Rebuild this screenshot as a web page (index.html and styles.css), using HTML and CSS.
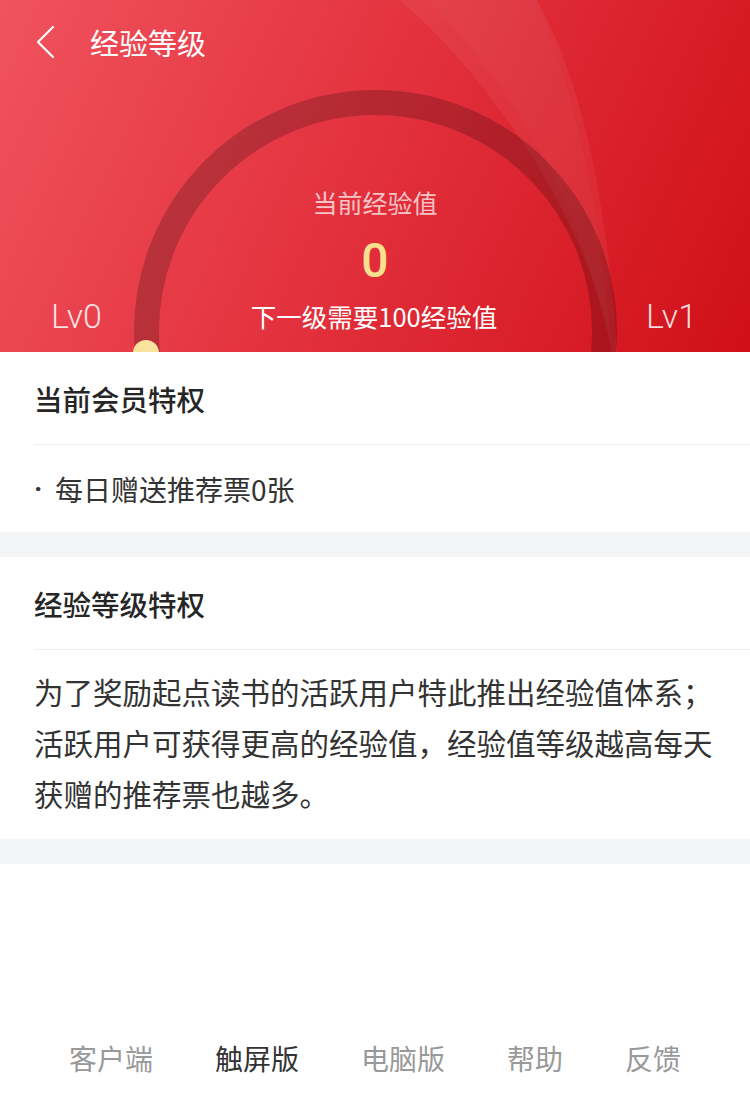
FILE: index.html
```html
<!DOCTYPE html>
<html lang="zh-CN">
<head>
<meta charset="utf-8">
<title>经验等级</title>
<link rel="stylesheet" href="styles.css">
</head>
<body>
<div class="page">
  <header class="hero">
    <svg class="hero-bg" width="750" height="352" viewBox="0 0 750 352" aria-hidden="true">
      <defs>
        <linearGradient id="bg" x1="0" y1="0" x2="750" y2="352" gradientUnits="userSpaceOnUse">
          <stop offset="0" stop-color="#f0535e"/>
          <stop offset="0.5" stop-color="#e2303c"/>
          <stop offset="1" stop-color="#d00f18"/>
        </linearGradient>
      </defs>
      <rect x="0" y="0" width="750" height="352" fill="url(#bg)"/>
      <path d="M400,0 C470,60 585,200 612,352 L617,352 C607,200 582,80 537,0 Z" fill="#ffffff" fill-opacity="0.055"/>
      <path d="M428,0 C495,70 570,170 603,320 L612,352 C600,210 575,90 537,0 Z" fill="#ffffff" fill-opacity="0.025"/>
      <circle cx="375.5" cy="331.5" r="229" fill="none" stroke="#000" stroke-opacity="0.2" stroke-width="25"/>
      <circle cx="146" cy="353" r="13" fill="#f9e29c"/>
    </svg>
    <nav class="nav">
      <svg class="back" width="22" height="34" viewBox="0 0 22 34" aria-hidden="true">
        <polyline points="18,2 3,17 18,32" fill="none" stroke="#fff" stroke-width="2.2" stroke-linecap="round" stroke-linejoin="round"/>
      </svg>
      <h1 class="nav-title">经验等级</h1>
    </nav>
    <div class="gauge">
      <div class="gauge-label">当前经验值</div>
      <div class="gauge-value">0</div>
      <div class="gauge-row">
        <span class="lv">Lv0</span>
        <span class="gauge-next">下一级需要100经验值</span>
        <span class="lv">Lv1</span>
      </div>
    </div>
  </header>

  <section class="card">
    <h2 class="card-title">当前会员特权</h2>
    <div class="card-item"><span class="bullet">·</span>每日赠送推荐票0张</div>
  </section>
  <div class="gap"></div>

  <section class="card">
    <h2 class="card-title">经验等级特权</h2>
    <p class="card-text">为了奖励起点读书的活跃用户特此推出经验值体系；活跃用户可获得更高的经验值，经验值等级越高每天获赠的推荐票也越多。</p>
  </section>
  <div class="gap"></div>

  <footer class="footer">
    <a class="footer-link">客户端</a>
    <a class="footer-link active">触屏版</a>
    <a class="footer-link">电脑版</a>
    <a class="footer-link">帮助</a>
    <a class="footer-link">反馈</a>
  </footer>
</div>
</body>
</html>
```
FILE: styles.css
```css
* { box-sizing: border-box; }
html, body { margin: 0; padding: 0; background: #fff; }
body {
  font-family: "Noto Sans CJK SC", "Noto Sans", sans-serif;
  color: #333;
}
.page { width: 750px; }

.hero {
  position: relative;
  height: 352px;
  overflow: hidden;
  color: #fff;
}
.hero-bg {
  position: absolute;
  left: 0;
  top: 0;
  display: block;
}
.nav {
  position: relative;
  height: 84px;
  display: flex;
  align-items: center;
  padding-left: 35px;
}
.back { display: block; }
.nav-title {
  margin: 0 0 0 33px;
  font-size: 29px;
  font-weight: 400;
  line-height: 40px;
}
.gauge {
  position: relative;
  padding-top: 100px;
  text-align: center;
}
.gauge-label {
  font-size: 25px;
  line-height: 36px;
  color: rgba(255, 255, 255, 0.72);
}
.gauge-value {
  margin-top: 13px;
  font-family: Roboto, "Noto Sans", sans-serif;
  font-size: 48px;
  font-weight: 500;
  line-height: 56px;
  color: #f9e08f;
}
.gauge-row {
  margin-top: 9px;
  display: grid;
  grid-template-columns: 1fr auto 1fr;
  align-items: center;
  padding: 0 53px 0 51px;
}
.gauge-next {
  font-size: 25.5px;
  line-height: 36px;
}
.lv {
  font-family: Roboto, "Noto Sans", sans-serif;
  font-weight: 300;
  font-size: 34px;
  line-height: 36px;
  color: rgba(255, 255, 255, 0.85);
  text-align: left;
}
.lv:last-child { text-align: right; }

.card {
  padding-left: 34px;
  background: #fff;
}
.card-title {
  margin: 0;
  height: 93px;
  display: flex;
  align-items: center;
  font-size: 28.5px;
  font-weight: 500;
  color: #262626;
  border-bottom: 1px solid #eeeeee;
}
.card-item {
  height: 87px;
  display: flex;
  align-items: center;
  font-size: 28px;
  color: #333;
}
.bullet {
  display: inline-block;
  width: 21px;
  font-family: Roboto, "Noto Sans", sans-serif;
  font-weight: 700;
}
.card-text {
  margin: 0;
  padding: 16px 34px 20px 0;
  font-size: 29.5px;
  line-height: 51px;
  color: #333;
}
.gap {
  height: 25px;
  background: #f4f5f7;
}
.footer {
  padding-top: 174px;
  display: flex;
  justify-content: center;
  gap: 62px;
}
.footer-link {
  font-size: 28px;
  line-height: 40px;
  color: #999;
  text-decoration: none;
}
.footer-link.active { color: #333; }
```
